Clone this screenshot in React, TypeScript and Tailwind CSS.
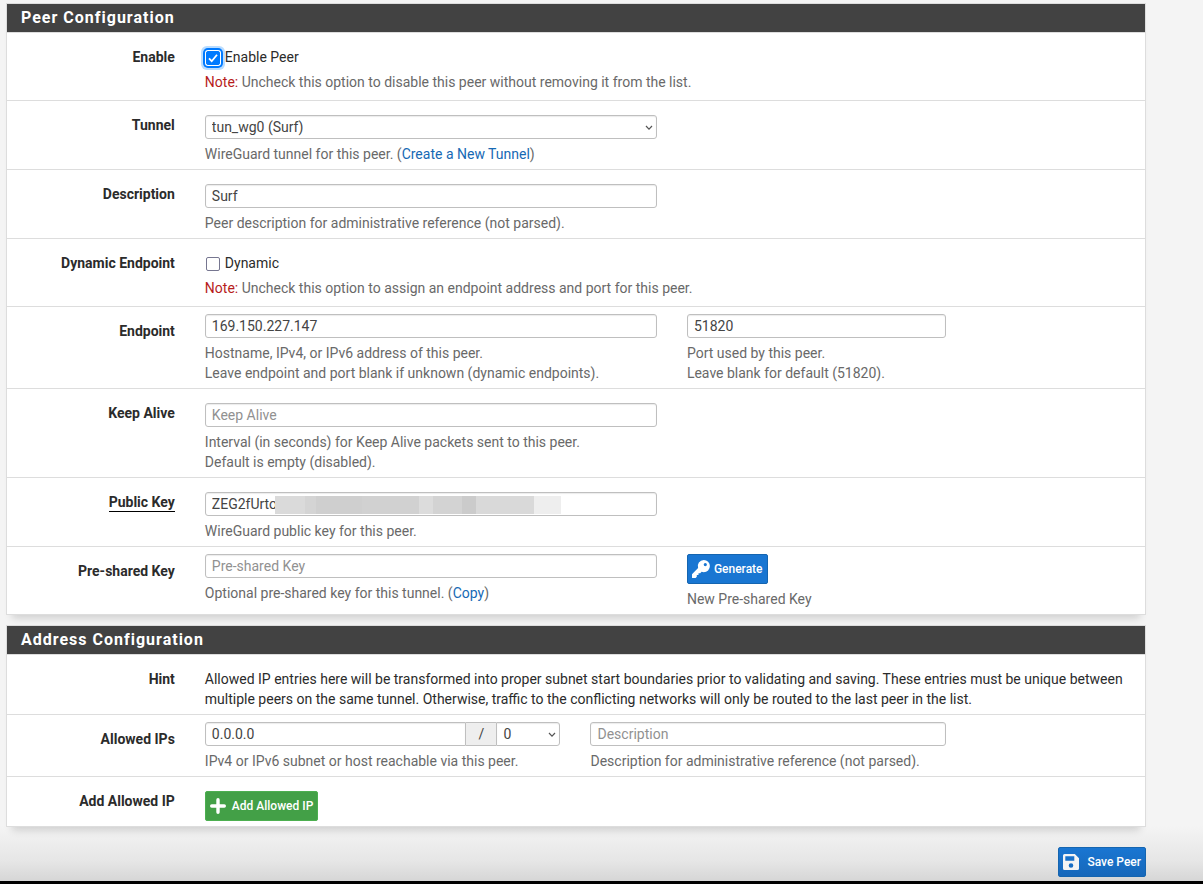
import type { InputHTMLAttributes, ReactNode } from 'react';

const PANEL = 'border border-[#dddddd] bg-white shadow-[0_9px_8px_-6px_rgba(0,0,0,0.16)]';
const CONTROL = 'block h-6 w-full rounded-[3px] border border-[#bfbfbf] bg-white px-[6px] text-sm leading-5 text-[#444444] shadow-[inset_0_1px_1px_rgba(0,0,0,0.08)] placeholder:text-[#919191]';
const BUTTON = 'inline-flex h-[30px] items-center rounded-[2px] border text-xs font-medium text-white';

const Panel = ({ title, children }: { title: string; children: ReactNode }) => (
  <section className={PANEL}>
    <h2 className="h-7 bg-[#424242] px-[14px] text-base leading-7 font-bold tracking-[1px] text-white">{title}</h2>
    {children}
  </section>
);

const Row = ({ label, htmlFor, underline, children }: { label: string; htmlFor?: string; underline?: boolean; children: ReactNode }) => (
  <div className="overflow-hidden border-t border-[#dddddd]">
    <div className="-mr-[9px] -ml-[10px] flex items-start">
      <div className="w-1/6 px-[15px] pt-[14px] text-right leading-5 font-bold text-[#2b2b2b]">
        <label htmlFor={htmlFor} className={underline ? 'inline-block h-5 border-b border-black' : 'inline-block'}>{label}</label>
      </div>
      {children}
    </div>
  </div>
);

const Help = ({ children }: { children: ReactNode }) => <p className="mt-[5px] leading-5 text-[#696969]">{children}</p>;

const Field = (props: InputHTMLAttributes<HTMLInputElement>) => <input type="text" className={CONTROL} {...props} />;

const Select = ({ id, value, label, joined }: { id: string; value: string; label?: string; joined?: boolean }) => (
  <div className={joined ? 'relative w-16' : 'relative'}>
    <select id={id} aria-label={label} className={`${CONTROL} appearance-none ${joined ? 'rounded-l-none' : ''}`}>
      <option>{value}</option>
    </select>
    <svg viewBox="0 0 8 6" className="pointer-events-none absolute top-[10px] right-1 h-[6px] w-2" fill="none" stroke="#555" strokeWidth="1.2">
      <path d="M1 1l3 3.2L7 1" />
    </svg>
  </div>
);

const Check = ({ id, text, note, checked }: { id: string; text: string; note: string; checked?: boolean }) => (
  <div className="flex-1 px-[15px] pt-[14px] pb-2">
    <div className="flex h-5 items-end">
      <span className="relative mb-[2px] ml-px h-[14px] w-[14px]">
        <input
          id={id}
          type="checkbox"
          defaultChecked={checked}
          className="peer block h-[14px] w-[14px] appearance-none rounded-[2px] border border-[#767690] bg-white checked:border-[#007aff] checked:bg-[#007aff] checked:shadow-[0_0_0_1px_#fff,0_0_0_3px_#007aff,0_0_0_5px_#b9dcff]"
        />
        <svg viewBox="0 0 14 14" className="pointer-events-none absolute inset-0 hidden peer-checked:block" fill="none" stroke="#fff" strokeWidth="1.8">
          <path d="M3 7.4l2.700 2.800L11 3.800" />
        </svg>
      </span>
      <label htmlFor={id} className="ml-[5px] leading-5 text-[#2b2b2b]">{text}</label>
    </div>
    <Help><span className="text-[#b71c1c]">Note:</span> {note}</Help>
  </div>
);

const App = () => (
  <div className="min-h-screen border-b-[3px] border-black bg-[#f4f4f4] font-['Roboto',sans-serif] text-sm">
    <main className="bg-[linear-gradient(to_top,#d6d6d6,#e6e6e6_20px,#f4f4f4_55px)] pt-[3px] pr-[57px] pb-1 pl-[6px]">
      <Panel title="Peer Configuration">
        <Row label="Enable" htmlFor="enabled">
          <Check id="enabled" text="Enable Peer" note="Uncheck this option to disable this peer without removing it from the list." checked />
        </Row>
        <Row label="Tunnel" htmlFor="tunnel">
          <div className="w-5/12 px-[15px] pt-[14px] pb-[5px]">
            <Select id="tunnel" value="tun_wg0 (Surf)" />
            <Help>WireGuard tunnel for this peer. (<a href="#tunnel" className="text-[#1669b4]">Create a New Tunnel</a>)</Help>
          </div>
        </Row>
        <Row label="Description" htmlFor="descr">
          <div className="w-5/12 px-[15px] pt-[14px] pb-[5px]">
            <Field id="descr" defaultValue="Surf" />
            <Help>Peer description for administrative reference (not parsed).</Help>
          </div>
        </Row>
        <Row label="Dynamic Endpoint" htmlFor="dynamic">
          <Check id="dynamic" text="Dynamic" note="Uncheck this option to assign an endpoint address and port for this peer." />
        </Row>
        <Row label="Endpoint" htmlFor="endpoint">
          <div className="w-5/12 px-[15px] pt-[7px] pb-[5px]">
            <Field id="endpoint" defaultValue="169.150.227.147" />
            <Help>Hostname, IPv4, or IPv6 address of this peer.<br />Leave endpoint and port blank if unknown (dynamic endpoints).</Help>
          </div>
          <div className="w-1/4 px-[15px] pt-[7px] pb-[5px]">
            <Field id="port" aria-label="Port" defaultValue="51820" />
            <Help>Port used by this peer.<br />Leave blank for default (51820).</Help>
          </div>
        </Row>
        <Row label="Keep Alive" htmlFor="keepalive">
          <div className="w-5/12 px-[15px] pt-[14px] pb-[5px]">
            <Field id="keepalive" placeholder="Keep Alive" />
            <Help>Interval (in seconds) for Keep Alive packets sent to this peer.<br />Default is empty (disabled).</Help>
          </div>
        </Row>
        <Row label="Public Key" htmlFor="publickey" underline>
          <div className="w-5/12 px-[15px] pt-[14px] pb-[5px]">
            <div className="relative">
              <Field id="publickey" defaultValue="ZEG2fUrto" />
              {/* redacted part of the key */}
              <div className="absolute top-1 left-[70px] flex h-[18px]">
                <span className="w-[30px] bg-[#dadada]" />
                <span className="w-[11px] bg-[#d4d4d4]" />
                <span className="w-[46px] bg-[#cfcfcf]" />
                <span className="w-[57px] bg-[#d1d1d1]" />
                <span className="w-[14px] bg-[#dcdcdc]" />
                <span className="w-[29px] bg-[#d3d3d3]" />
                <span className="w-[14px] bg-[#cbcbcb]" />
                <span className="w-[58px] bg-[#d9d9d9]" />
                <span className="w-[27px] bg-[#eeeeee]" />
              </div>
            </div>
            <Help>WireGuard public key for this peer.</Help>
          </div>
        </Row>
        <Row label="Pre-shared Key" htmlFor="psk">
          <div className="w-5/12 px-[15px] pt-[7px] pb-[5px]">
            <Field id="psk" placeholder="Pre-shared Key" />
            <Help>Optional pre-shared key for this tunnel. (<a href="#psk" className="text-[#1669b4]">Copy</a>)</Help>
          </div>
          <div className="w-1/4 px-[15px] pt-[7px] pb-[5px]">
            <button type="button" className={`${BUTTON} border-[#1565b0] bg-[#1976d2] px-1`}>
              <svg viewBox="0 0 18 18" className="mr-1 h-[18px] w-[18px]" fill="#fff">
                <path fillRule="evenodd" d="M11.8 0a6.1 6.1 0 0 1 0 12.2c-.8 0-1.5-.1-2.2-.4L8.2 13.300H6.500V15H4.800v1.700L3.600 18H.6a.6.6 0 0 1-.6-.6v-3.200l6.100-6.100A6.100 6.100 0 0 1 11.800 0zM13.300 3a1.600 1.600 0 1 0 0 3.200 1.600 1.600 0 0 0 0-3.200z" />
              </svg>
              Generate
            </button>
            <Help>New Pre-shared Key</Help>
          </div>
        </Row>
      </Panel>

      <div className="mt-[10px]">
        <Panel title="Address Configuration">
          <Row label="Hint">
            <p className="w-5/6 px-[15px] pt-[14px] pb-[5px] leading-5 text-[#2b2b2b]">
              Allowed IP entries here will be transformed into proper subnet start boundaries prior to validating and saving. These entries must be unique between multiple peers on the same tunnel. Otherwise, traffic to the conflicting networks will only be routed to the last peer in the list.
            </p>
          </Row>
          <Row label="Allowed IPs" htmlFor="address">
            <div className="w-1/3 px-[15px] pt-[7px] pb-[5px]">
              <div className="flex">
                <input id="address" type="text" defaultValue="0.0.0.0" className={`${CONTROL} min-w-0 flex-1 rounded-r-none`} />
                <span className="h-6 w-[30px] border-y border-[#bfbfbf] bg-[#eeeeee] text-center leading-[22px] text-[#444444]">/</span>
                <Select id="mask" label="Subnet mask" value="0" joined />
              </div>
              <Help>IPv4 or IPv6 subnet or host reachable via this peer.</Help>
            </div>
            <div className="w-1/3 px-[15px] pt-[7px] pb-[5px]">
              <Field id="address_descr" aria-label="Description" placeholder="Description" />
              <Help>Description for administrative reference (not parsed).</Help>
            </div>
          </Row>
          <Row label="Add Allowed IP" htmlFor="addrow">
            <div className="flex px-[15px] pt-[14px] pb-[5px]">
              <button id="addrow" type="button" className={`${BUTTON} border-[#4caf50] bg-[#43a047] px-1`}>
                <svg viewBox="0 0 16 16" className="mr-[6px] h-4 w-4" stroke="#fff" strokeWidth="3.400" strokeLinecap="round">
                  <path d="M8 1.700v12.600M1.700 8h12.600" />
                </svg>
                Add Allowed IP
              </button>
            </div>
          </Row>
        </Panel>
      </div>

      <div className="mt-5 flex justify-end">
        <button type="submit" className={`${BUTTON} border-[#1565b0] bg-linear-to-b from-[#1976d2] to-[#1768ba] px-1`}>
          <svg viewBox="0 0 16 16" className="mr-2 h-4 w-4" fill="#f4f4f4">
            <path fillRule="evenodd" d="M1.500 0h10.300L16 4.200v10.300a1.500 1.500 0 0 1-1.500 1.500h-13A1.500 1.500 0 0 1 0 14.500v-13A1.500 1.500 0 0 1 1.500 0zM2.300 2.300v4.500h9V2.300zM8 9.200a2.300 2.300 0 1 0 0 4.600 2.300 2.300 0 0 0 0-4.600z" />
          </svg>
          Save Peer
        </button>
      </div>
    </main>
  </div>
);

export default App;
